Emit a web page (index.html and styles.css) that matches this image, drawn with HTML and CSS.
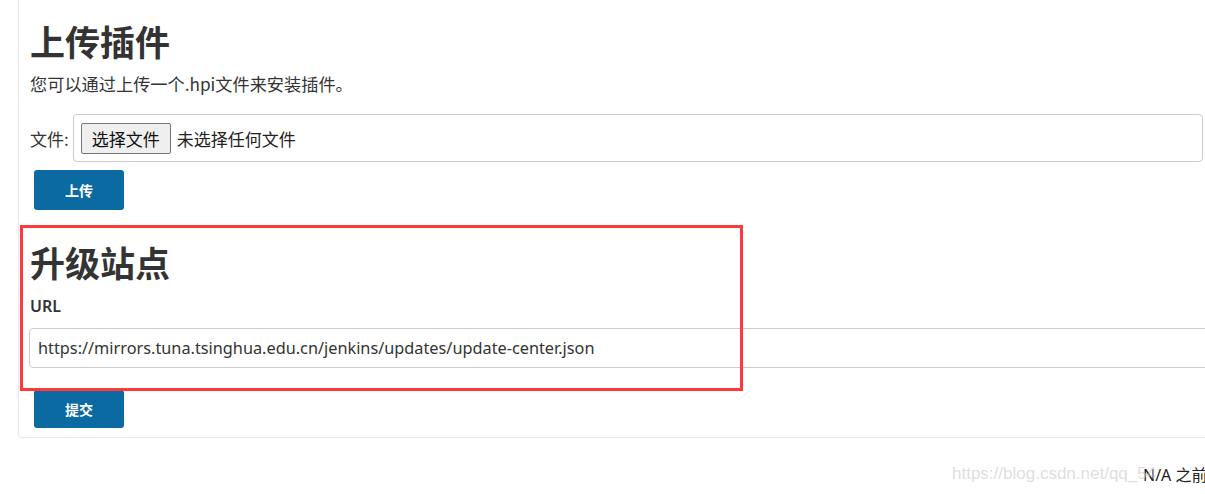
FILE: index.html
```html
<!DOCTYPE html>
<html lang="zh-CN">
<head>
<meta charset="utf-8">
<title>上传插件</title>
<link rel="stylesheet" href="styles.css">
</head>
<body>
<div class="page">
  <div class="card">
    <section class="upload">
      <h1 class="title">上传插件</h1>
      <p class="desc">您可以通过上传一个.hpi文件来安装插件。</p>
      <div class="file-row">
        <span class="file-label">文件:</span>
        <div class="file-box">
          <span class="file-btn">选择文件</span>
          <span class="file-none">未选择任何文件</span>
        </div>
      </div>
      <button class="btn" type="button">上传</button>
    </section>
    <section class="site">
      <h1 class="title">升级站点</h1>
      <div class="url-label">URL</div>
      <input class="url-input" type="text" value="https://mirrors.tuna.tsinghua.edu.cn/jenkins/updates/update-center.json">
      <button class="btn btn-submit" type="button">提交</button>
    </section>
  </div>
  <div class="footer"><span class="footer-text">N/A 之前</span></div>
  <div class="highlight"></div>
  <div class="watermark">https://blog.csdn.net/qq_54</div>
</div>
</body>
</html>
```

FILE: styles.css
```css
html, body {
  margin: 0;
  padding: 0;
}
body {
  width: 1205px;
  height: 494px;
  overflow: hidden;
  background: #ffffff;
  color: #333333;
  font-family: "Noto Sans", "Noto Sans CJK SC", sans-serif;
}
.page {
  position: relative;
  padding-left: 18px;
}
.card {
  width: 1230px;
  border: 1px solid #e8e8e8;
  border-top: none;
  border-radius: 0 0 4px 4px;
  padding: 21px 0 9px 11px;
  box-sizing: border-box;
}
.title {
  margin: 0;
  font-size: 35px;
  line-height: 40px;
  font-weight: 700;
  color: #333333;
  font-family: "Noto Sans CJK SC", "Noto Sans", sans-serif;
}
.desc {
  margin: 11px 0 0;
  font-size: 17.2px;
  line-height: 24px;
  font-family: "Noto Sans CJK SC", "Noto Sans", sans-serif;
}
.file-row {
  display: flex;
  align-items: center;
  margin-top: 18px;
}
.file-label {
  font-size: 17px;
  font-family: "Noto Sans CJK SC", sans-serif;
  margin-right: 4px;
}
.file-box {
  display: flex;
  align-items: center;
  width: 1130px;
  height: 48px;
  box-sizing: border-box;
  border: 1px solid #cccccc;
  border-radius: 4px;
  padding-left: 7px;
}
.file-btn {
  display: inline-flex;
  align-items: center;
  justify-content: center;
  width: 90px;
  height: 31px;
  box-sizing: border-box;
  background: #efefef;
  border: 1px solid #767676;
  border-radius: 2px;
  font-size: 17px;
  color: #111111;
  font-family: "Noto Sans CJK SC", sans-serif;
}
.file-none {
  margin-left: 6px;
  font-size: 17px;
  color: #222222;
  font-family: "Noto Sans CJK SC", sans-serif;
}
.btn {
  display: block;
  margin: 8px 0 0 4px;
  width: 90px;
  height: 40px;
  border: none;
  border-radius: 3px;
  background: #0b6aa2;
  color: #ffffff;
  font-size: 14px;
  font-weight: 700;
  font-family: "Noto Sans CJK SC", sans-serif;
  padding: 0;
}
.site {
  margin-top: 32px;
}
.url-label {
  margin-top: 13px;
  font-size: 16px;
  line-height: 22px;
  font-weight: 600;
  font-family: "Noto Sans", sans-serif;
}
.url-input {
  display: block;
  margin: 11px 0 0 -1px;
  width: 1190px;
  height: 40px;
  box-sizing: border-box;
  border: 1px solid #cccccc;
  border-radius: 4px;
  padding: 0 8px;
  font-size: 16.3px;
  color: #333333;
  font-family: "Noto Sans", sans-serif;
  background: #ffffff;
}
.btn-submit {
  margin-top: 22px;
  height: 38px;
}
.footer {
  display: flex;
  padding: 26px 0 0 1125px;
  white-space: nowrap;
}
.footer-text {
  font-size: 16px;
  line-height: 22px;
  color: #222222;
  font-family: "Noto Sans", "Noto Sans CJK SC", sans-serif;
}
.highlight {
  position: absolute;
  left: 20px;
  top: 225px;
  width: 723px;
  height: 166px;
  box-sizing: border-box;
  border: 3px solid #fd3a3a;
}
.watermark {
  position: absolute;
  left: 952px;
  top: 464px;
  font-size: 17px;
  color: rgba(200, 200, 200, 0.6);
  font-family: "Liberation Sans", sans-serif;
  white-space: nowrap;
}
```
